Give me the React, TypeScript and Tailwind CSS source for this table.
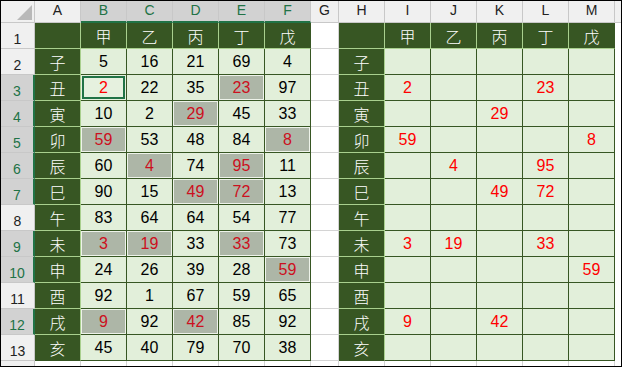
import React from "react";

const names = ["子", "丑", "寅", "卯", "辰", "巳", "午", "未", "申", "酉", "戌", "亥"];
const stems = ["甲", "乙", "丙", "丁", "戊"];
const data: number[][] = [
  [5, 16, 21, 69, 4],
  [2, 22, 35, 23, 97],
  [10, 2, 29, 45, 33],
  [59, 53, 48, 84, 8],
  [60, 4, 74, 95, 11],
  [90, 15, 49, 72, 13],
  [83, 64, 64, 54, 77],
  [3, 19, 33, 33, 73],
  [24, 26, 39, 28, 59],
  [92, 1, 67, 59, 65],
  [9, 92, 42, 85, 92],
  [45, 40, 79, 70, 38],
];
// [sheetRow, colIndex]
const marked = new Set<string>([
  "3-0", "3-3", "4-2", "5-0", "5-4", "6-1", "6-3", "7-2", "7-3",
  "9-0", "9-1", "9-3", "10-4", "12-0", "12-2",
]);
const selRows = new Set([3, 4, 5, 6, 7, 9, 10, 12]);

const num = "font-['Liberation_Sans',sans-serif] text-[16px] leading-none";
const cjk = "font-['Noto_Sans_CJK_TC','Noto_Sans_CJK_SC',sans-serif] text-[16px] font-light leading-none";
const hdr = "font-['Liberation_Sans',sans-serif] text-[14px] leading-none";

function ColHeader({ label, w, sel }: { label: string; w: string; sel?: boolean }) {
  return (
    <div
      className={`${w} h-[22px] flex items-center justify-center pb-[3px] border-r border-r-[#c8c8c8] ${hdr} ${
        sel
          ? "bg-[#d2d2d2] text-[#217346] border-b-2 border-b-[#217346]"
          : "bg-[#f0f0f0] text-[#222] border-b border-b-[#c8c8c8]"
      }`}
    >
      {label}
    </div>
  );
}

function RowHeader({ n }: { n: number }) {
  const sel = selRows.has(n);
  return (
    <div
      className={`w-[34px] h-[26px] flex items-center justify-center pt-[6px] border-b border-b-[#c8c8c8] ${hdr} ${
        sel
          ? "bg-[#d2d2d2] text-[#217346] border-r-2 border-r-[#217346]"
          : "bg-[#f0f0f0] text-[#222] border-r border-r-[#c8c8c8]"
      }`}
    >
      {n}
    </div>
  );
}

function DarkCell({ text, lastCol, lastRow }: { text: string; lastCol?: boolean; lastRow?: boolean }) {
  return (
    <div
      className={`w-[46px] h-[26px] flex items-center justify-center bg-[#375623] text-white ${cjk} border-r border-b ${
        lastCol ? "border-r-[#375623]" : "border-r-[#a9d08e]"
      } ${lastRow ? "border-b-[#375623]" : "border-b-[#a9d08e]"}`}
    >
      {text}
    </div>
  );
}

function DataCell({
  value,
  red,
  selected,
  active,
}: {
  value: string;
  red?: boolean;
  selected?: boolean;
  active?: boolean;
}) {
  let cls = "bg-[#e2efda]";
  let color = "text-black";
  if (red) color = "text-[#ff0000]";
  if (selected) {
    cls = "bg-[#adb6a7] shadow-[inset_0_0_0_1px_#eef3ea]";
    color = "text-[#cc1020]";
  }
  if (active) {
    cls = "bg-[#e6f1df] shadow-[inset_0_0_0_1px_#e6f1df,inset_0_0_0_3px_#217346]";
    color = "text-[#ff0000]";
  }
  return (
    <div
      className={`w-[46px] h-[26px] flex items-center justify-center border-r border-b border-[#375623] ${num} ${cls} ${color}`}
    >
      {value}
    </div>
  );
}

function BlankCell() {
  return <div className="w-[28px] h-[26px] bg-white border-r border-b border-[#d4d4d4]" />;
}

export default function App() {
  const colLetters = ["B", "C", "D", "E", "F"];
  const rightLetters = ["I", "J", "K", "L", "M"];
  return (
    <div className="w-[623px] h-[369px] bg-white">
      <div className="w-[622px] h-[367px] border border-black overflow-hidden bg-white">
        {/* column headers */}
        <div className="flex h-[22px]">
          <div className="w-[34px] h-[22px] bg-[#f0f0f0] border-r border-b border-[#c8c8c8] flex items-end justify-end pr-[2px] pb-[2px]">
            <svg width="15" height="15" viewBox="0 0 15 15">
              <polygon points="15,0 15,15 0,15" fill="#b9b9b9" />
            </svg>
          </div>
          <ColHeader label="A" w="w-[46px]" />
          {colLetters.map((l) => (
            <ColHeader key={l} label={l} w="w-[46px]" sel />
          ))}
          <ColHeader label="G" w="w-[28px]" />
          <ColHeader label="H" w="w-[46px]" />
          {rightLetters.map((l) => (
            <ColHeader key={l} label={l} w="w-[46px]" />
          ))}
          <div className="flex-1 h-[22px] bg-[#f0f0f0] border-b border-[#c8c8c8]" />
        </div>

        {/* row 1 */}
        <div className="flex h-[26px]">
          <RowHeader n={1} />
          <DarkCell text="" />
          {stems.map((s, i) => (
            <DarkCell key={s} text={s} lastCol={i === 4} />
          ))}
          <BlankCell />
          <DarkCell text="" />
          {stems.map((s, i) => (
            <DarkCell key={"r" + s} text={s} lastCol={i === 4} />
          ))}
          <div className="flex-1" />
        </div>

        {data.map((row, ri) => {
          const n = ri + 2;
          const last = n === 13;
          return (
            <div key={n} className="flex h-[26px]">
              <RowHeader n={n} />
              <DarkCell text={names[ri]} lastRow={last} />
              {row.map((v, ci) => {
                const m = marked.has(`${n}-${ci}`);
                const active = n === 3 && ci === 0;
                return (
                  <DataCell
                    key={ci}
                    value={String(v)}
                    red={m}
                    selected={m && !active}
                    active={active}
                  />
                );
              })}
              <BlankCell />
              <DarkCell text={names[ri]} lastRow={last} />
              {row.map((v, ci) => {
                const m = marked.has(`${n}-${ci}`);
                return <DataCell key={"r" + ci} value={m ? String(v) : ""} red />;
              })}
              <div className="flex-1" />
            </div>
          );
        })}

        {/* partial row 14 */}
        <div className="flex h-[5px]">
          <div className="w-[34px] h-[5px] bg-[#f0f0f0] border-r border-[#c8c8c8]" />
          {Array.from({ length: 6 }).map((_, i) => (
            <div key={i} className="w-[46px] h-[5px] border-r border-[#d4d4d4]" />
          ))}
          <div className="w-[28px] h-[5px] border-r border-[#d4d4d4]" />
          {Array.from({ length: 6 }).map((_, i) => (
            <div key={"b" + i} className="w-[46px] h-[5px] border-r border-[#d4d4d4]" />
          ))}
        </div>
      </div>
    </div>
  );
}
